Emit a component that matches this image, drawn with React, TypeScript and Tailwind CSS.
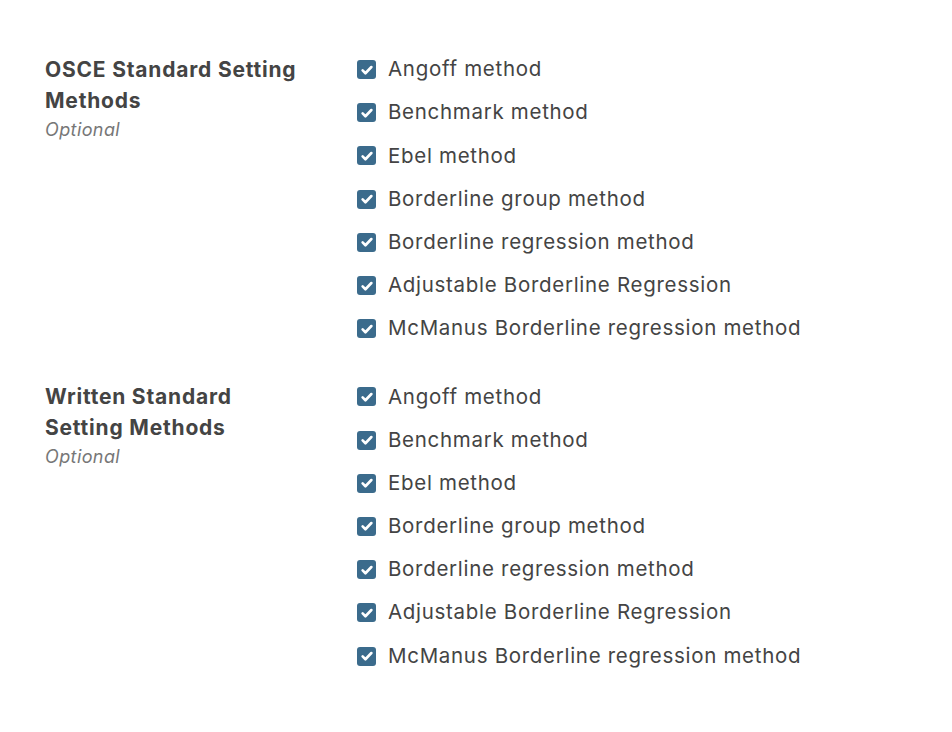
import React from "react";

const methods = [
  "Angoff method",
  "Benchmark method",
  "Ebel method",
  "Borderline group method",
  "Borderline regression method",
  "Adjustable Borderline Regression",
  "McManus Borderline regression method",
];

function Check({ label }: { label: string }) {
  return (
    <label className="flex items-center h-[43.2px] gap-[12px]">
      <span className="w-[19px] h-[19px] rounded-[3px] bg-[#3b6b8c] flex items-center justify-center shrink-0">
        <svg width="14" height="14" viewBox="0 0 16 16" fill="none">
          <path d="M3 8.5l3.2 3.2L13 4.6" stroke="white" strokeWidth="3" strokeLinecap="round" strokeLinejoin="round" />
        </svg>
      </span>
      <span className="text-[20.5px] text-[#444444] tracking-[0.7px]">{label}</span>
    </label>
  );
}

function Section({ title }: { title: string }) {
  return (
    <div className="flex">
      <div className="w-[312px] shrink-0 pt-[6px]">
        <div className="w-[258px] text-[21px] leading-[31px] font-bold text-[#444444] tracking-[0.8px]">{title}</div>
        <div className="text-[18px] italic text-[#777777] leading-[26px] tracking-[0.4px] mt-[1px]">Optional</div>
      </div>
      <div className="flex flex-col">
        {methods.map((m) => (
          <Check key={m} label={m} />
        ))}
      </div>
    </div>
  );
}

export default function App() {
  return (
    <div className="w-[952px] h-[732px] bg-white pl-[45px] pt-[48px] flex flex-col gap-[25px]" style={{ fontFamily: "Inter, 'Noto Sans', sans-serif" }}>
      <Section title="OSCE Standard Setting Methods" />
      <Section title="Written Standard Setting Methods" />
    </div>
  );
}
